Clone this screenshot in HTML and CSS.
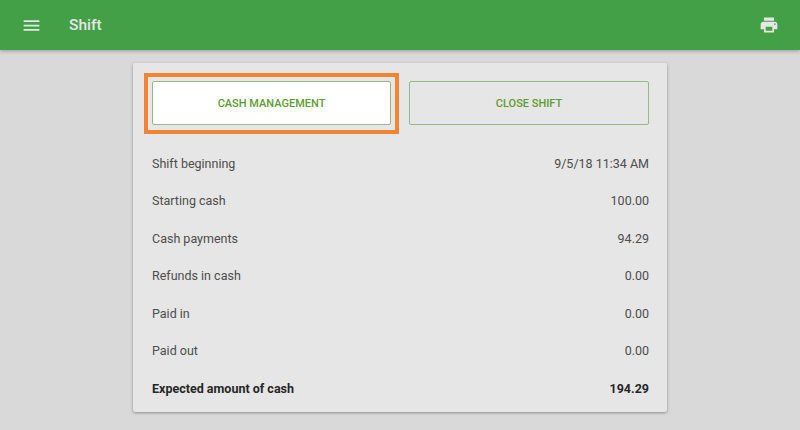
FILE: index.html
```html
<!DOCTYPE html>
<html>

<head>
    <meta charset="utf-8" />
    <meta name="viewport" content="width=device-width, initial-scale=1.0" />
    <title>Shift</title>
    <link rel="stylesheet" href="styles.css">
</head>

<body>
    <header class="app-bar">
        <svg class="icon menu-icon" viewBox="0 0 24 24" width="21" height="21">
            <path d="M3 18h18v-2H3v2zm0-5h18v-2H3v2zm0-7v2h18V6H3z" />
        </svg>
        <div class="app-title">Shift</div>
        <svg class="icon print-icon" viewBox="0 0 24 24" width="20" height="20">
            <path
                d="M19 8H5c-1.66 0-3 1.34-3 3v6h4v4h12v-4h4v-6c0-1.66-1.34-3-3-3zm-3 11H8v-5h8v5zm3-7c-.55 0-1-.45-1-1s.45-1 1-1 1 .45 1 1-.45 1-1 1zm-1-9H6v4h12V3z" />
        </svg>
    </header>

    <main class="content">
        <section class="shift-card">
            <div class="shift-actions">
                <button type="button" class="shift-btn shift-btn--active">CASH MANAGEMENT</button>
                <button type="button" class="shift-btn">CLOSE SHIFT</button>
            </div>
            <div class="shift-rows">
                <div class="shift-row"><span>Shift beginning</span><span>9/5/18 11:34 AM</span></div>
                <div class="shift-row"><span>Starting cash</span><span>100.00</span></div>
                <div class="shift-row"><span>Cash payments</span><span>94.29</span></div>
                <div class="shift-row"><span>Refunds in cash</span><span>0.00</span></div>
                <div class="shift-row"><span>Paid in</span><span>0.00</span></div>
                <div class="shift-row"><span>Paid out</span><span>0.00</span></div>
                <div class="shift-row shift-row--total"><span>Expected amount of cash</span><span>194.29</span></div>
            </div>
        </section>
    </main>
</body>

</html>
```

FILE: styles.css
```css
/* Общие стили */
body {
    margin: 0;
    height: 430px;
    overflow: hidden;
    font-family: 'Roboto', 'Liberation Sans', sans-serif;
    background-color: #d9d9d9;
    color: #4d4d4d;
}

.app-bar {
    display: flex;
    align-items: center;
    height: 50px;
    padding: 0 21px 0 21px;
    background-color: #43a047;
    color: #e6e6e6;
    box-shadow: 0 1px 4px rgba(0, 0, 0, 0.3);
}

.icon {
    display: block;
    flex: none;
    fill: #e6e6e6;
}

.app-title {
    flex: 1;
    margin-left: 27px;
    font-size: 15.5px;
    font-weight: 500;
}

.content {
    display: flex;
    justify-content: center;
    padding-top: 13px;
}

.shift-card {
    width: 534px;
    height: 349px;
    box-sizing: border-box;
    padding: 18px 18px 0 19px;
    background-color: #e6e6e6;
    border-radius: 2px;
    box-shadow: 0 1px 3px rgba(0, 0, 0, 0.35);
}

.shift-actions {
    display: flex;
    gap: 18px;
}

.shift-btn {
    flex: 1;
    height: 44px;
    padding: 0;
    font-family: inherit;
    font-size: 11px;
    font-weight: 500;
    color: #5e9c32;
    background: transparent;
    border: 1px solid #97b886;
    border-radius: 2px;
}

/* Оранжевая рамка-подсказка поверх кнопки */
.shift-btn--active {
    flex: 0 0 239px;
    position: relative;
    background-color: #ffffff;
}

.shift-btn--active::after {
    content: '';
    position: absolute;
    top: -9px;
    right: -9px;
    bottom: -10px;
    left: -9px;
    border: 4px solid #f18435;
}

.shift-rows {
    margin-top: 19.5px;
}

.shift-row {
    display: flex;
    justify-content: space-between;
    align-items: center;
    height: 37.5px;
    font-size: 12.5px;
}

.shift-row--total {
    font-weight: 700;
    color: #262626;
}
```
